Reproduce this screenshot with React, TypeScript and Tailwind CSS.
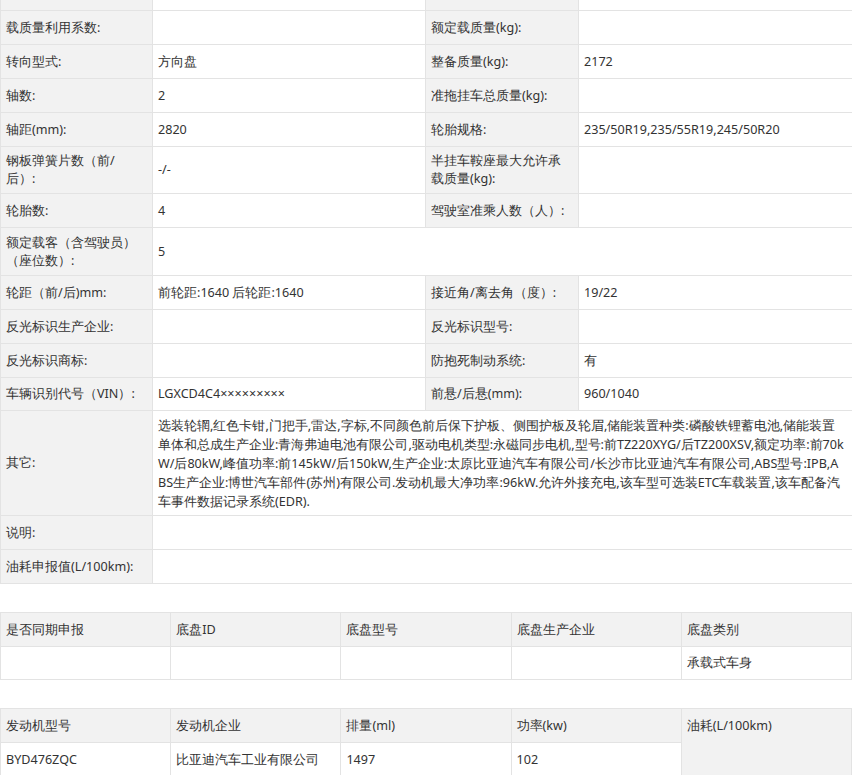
import React from "react";

const L = "bg-[#f2f2f2] border border-[#e3e3e3] pl-[5px] pr-[8px] align-middle text-left font-normal";
const V = "bg-white border border-[#e3e3e3] pl-[5px] pr-[8px] align-middle";

type R = [string, string, string, string, string];
const rows: R[] = [
  ["", "", "", "", "h-[34px]"],
  ["载质量利用系数:", "", "额定载质量(kg):", "", "h-[34px]"],
  ["转向型式:", "方向盘", "整备质量(kg):", "2172", "h-[34px]"],
  ["轴数:", "2", "准拖挂车总质量(kg):", "", "h-[34px]"],
  ["轴距(mm):", "2820", "轮胎规格:", "235/50R19,235/55R19,245/50R20", "h-[34px]"],
  ["钢板弹簧片数（前/后）:", "-/-", "半挂车鞍座最大允许承载质量(kg):", "", "h-[47px]"],
  ["轮胎数:", "4", "驾驶室准乘人数（人）:", "", "h-[34px]"],
];
const rows2: R[] = [
  ["轮距（前/后)mm:", "前轮距:1640 后轮距:1640", "接近角/离去角（度）:", "19/22", "h-[34px]"],
  ["反光标识生产企业:", "", "反光标识型号:", "", "h-[34px]"],
  ["反光标识商标:", "", "防抱死制动系统:", "有", "h-[34px]"],
  ["车辆识别代号（VIN）:", "LGXCD4C4×××××××××", "前悬/后悬(mm):", "960/1040", "h-[33px]"],
];
const other =
  "选装轮辋,红色卡钳,门把手,雷达,字标,不同颜色前后保下护板、侧围护板及轮眉,储能装置种类:磷酸铁锂蓄电池,储能装置单体和总成生产企业:青海弗迪电池有限公司,驱动电机类型:永磁同步电机,型号:前TZ220XYG/后TZ200XSV,额定功率:前70kW/后80kW,峰值功率:前145kW/后150kW,生产企业:太原比亚迪汽车有限公司/长沙市比亚迪汽车有限公司,ABS型号:IPB,ABS生产企业:博世汽车部件(苏州)有限公司.发动机最大净功率:96kW.允许外接充电,该车型可选装ETC车载装置,该车配备汽车事件数据记录系统(EDR).";

function Row({ r }: { r: R }) {
  return (
    <tr className={r[4]}>
      <td className={L}>{r[0]}</td>
      <td className={V}>{r[1]}</td>
      <td className={L}>{r[2]}</td>
      <td className={V}>{r[3]}</td>
    </tr>
  );
}

export default function App() {
  return (
    <div className="w-[852px] h-[775px] overflow-hidden bg-white text-[12.6px] leading-[18px] text-[#333] font-['Noto_Sans_CJK_SC','Noto_Sans',sans-serif]">
      <table className="w-[852px] border-collapse table-fixed -mt-[24px]">
        <colgroup>
          <col className="w-[152px]" />
          <col className="w-[273px]" />
          <col className="w-[153px]" />
          <col className="w-[274px]" />
        </colgroup>
        <tbody>
          {rows.map((r, i) => (
            <Row key={i} r={r} />
          ))}
          <tr className="h-[48px]">
            <td className={L}>额定载客（含驾驶员）（座位数）:</td>
            <td className={V} colSpan={3}>5</td>
          </tr>
          {rows2.map((r, i) => (
            <Row key={i} r={r} />
          ))}
          <tr className="h-[105px]">
            <td className={L}>其它:</td>
            <td className={V + " py-[4px] leading-[19px] break-all"} colSpan={3}>{other}</td>
          </tr>
          <tr className="h-[34px]">
            <td className={L}>说明:</td>
            <td className={V} colSpan={3}></td>
          </tr>
          <tr className="h-[34px]">
            <td className={L}>油耗申报值(L/100km):</td>
            <td className={V} colSpan={3}></td>
          </tr>
        </tbody>
      </table>

      <table className="w-[852px] border-collapse table-fixed mt-[28px]">
        <tbody>
          <tr className="h-[34px]">
            {["是否同期申报", "底盘ID", "底盘型号", "底盘生产企业", "底盘类别"].map((t) => (
              <td key={t} className={L}>{t}</td>
            ))}
          </tr>
          <tr className="h-[33px]">
            {["", "", "", "", "承载式车身"].map((t, i) => (
              <td key={i} className={V}>{t}</td>
            ))}
          </tr>
        </tbody>
      </table>

      <table className="w-[852px] border-collapse table-fixed mt-[28px]">
        <tbody>
          <tr className="h-[34px]">
            {["发动机型号", "发动机企业", "排量(ml)", "功率(kw)"].map((t) => (
              <td key={t} className={L}>{t}</td>
            ))}
            <td rowSpan={2} className={L + " align-top pt-[8px]"}>油耗(L/100km)</td>
          </tr>
          <tr className="h-[35px]">
            {["BYD476ZQC", "比亚迪汽车工业有限公司", "1497", "102"].map((t, i) => (
              <td key={i} className={V}>{t}</td>
            ))}
          </tr>
        </tbody>
      </table>
    </div>
  );
}
